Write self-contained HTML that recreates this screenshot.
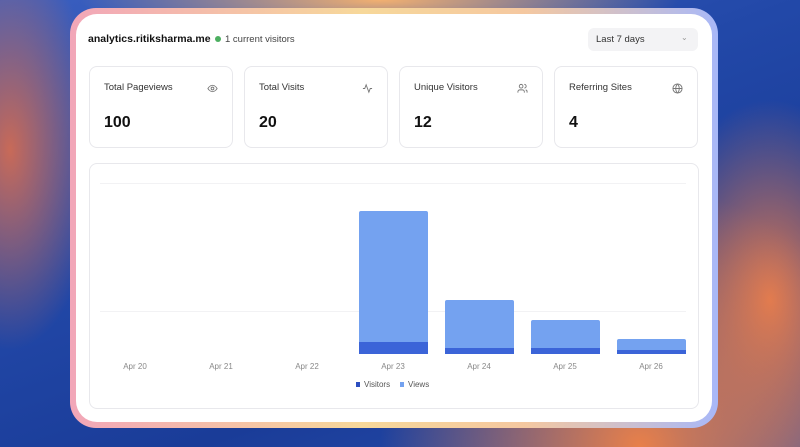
<!DOCTYPE html>
<html><head><style>
*{margin:0;padding:0;box-sizing:border-box}
body{width:800px;height:447px;overflow:hidden;font-family:"Liberation Sans",sans-serif;position:relative;
background:
radial-gradient(ellipse 300px 40px at 380px 0px,#f2b070 0%,rgba(240,160,100,0) 100%),
radial-gradient(ellipse 260px 260px at 640px 447px,#e8804a 0%,rgba(232,128,74,0) 100%),
radial-gradient(ellipse 120px 200px at 770px 300px,#e07a50 0%,rgba(224,122,80,0) 100%),
radial-gradient(ellipse 90px 200px at 10px 150px,#c86a58 0%,rgba(200,106,88,0) 100%),
linear-gradient(160deg,#3a5fc0 0%,#2248a8 40%,#1a3c98 70%,#2a50b0 100%);}
.frame{position:absolute;left:70px;top:8px;width:648px;height:420px;border-radius:26px;
background:linear-gradient(90deg,#f2a6b8,#f7d89a 45%,#f5c8a0 70%,#a8b8f8);}
.card{position:absolute;left:76px;top:14px;width:636px;height:408px;border-radius:21px;background:#fff;}
.t{position:absolute;font-size:11px;color:#222}
.stat{position:absolute;top:66px;width:144px;height:82px;border:1px solid #e8e8ec;border-radius:8px;background:#fff}
.stat .l{position:absolute;left:14px;top:15px;font-size:9.5px;color:#333}
.stat .v{position:absolute;left:14px;top:47px;font-size:16px;font-weight:bold;color:#111}
.stat svg{position:absolute;right:14px;top:16px}
.bar{position:absolute;width:69px;background:#74a2f0;border-radius:2px 2px 0 0}
.bar i{position:absolute;left:0;right:0;bottom:0;background:#3b64d8}
.lab{position:absolute;top:362px;font-size:8px;color:#888;width:60px;text-align:center}
</style></head><body>
<div class="frame"></div>
<div class="card"></div>
<div class="t" style="left:88px;top:33px;font-size:10.5px;font-weight:bold;color:#111">analytics.ritiksharma.me</div>
<div style="position:absolute;left:215px;top:36px;width:6px;height:6px;border-radius:50%;background:#4caf60"></div>
<div class="t" style="left:225px;top:34px;font-size:9.5px;color:#444">1 current visitors</div>
<div style="position:absolute;left:588px;top:28px;width:110px;height:23px;border-radius:6px;background:#f3f3f5"></div>
<div class="t" style="left:596px;top:34px;font-size:9.5px;color:#333">Last 7 days</div>
<div class="t" style="left:681px;top:33px;font-size:8px;color:#999">&#8964;</div>
<div class="stat" style="left:89px"><div class="l">Total Pageviews</div><div class="v">100</div>
<svg width="11" height="11" viewBox="0 0 24 24" fill="none" stroke="#777" stroke-width="2"><path d="M2 12s4-7 10-7 10 7 10 7-4 7-10 7S2 12 2 12z"/><circle cx="12" cy="12" r="3"/></svg></div>
<div class="stat" style="left:244px"><div class="l">Total Visits</div><div class="v">20</div>
<svg width="11" height="11" viewBox="0 0 24 24" fill="none" stroke="#777" stroke-width="2"><path d="M2 12h4l3-8 6 16 3-8h4"/></svg></div>
<div class="stat" style="left:399px"><div class="l">Unique Visitors</div><div class="v">12</div>
<svg width="11" height="11" viewBox="0 0 24 24" fill="none" stroke="#777" stroke-width="2"><circle cx="9" cy="7" r="4"/><path d="M2 21v-2a4 4 0 0 1 4-4h6a4 4 0 0 1 4 4v2M16 3a4 4 0 0 1 0 8M22 21v-2a4 4 0 0 0-3-4"/></svg></div>
<div class="stat" style="left:554px"><div class="l">Referring Sites</div><div class="v">4</div>
<svg width="11" height="11" viewBox="0 0 24 24" fill="none" stroke="#777" stroke-width="2"><circle cx="12" cy="12" r="10"/><path d="M2 12h20M12 2a15 15 0 0 1 0 20M12 2a15 15 0 0 0 0 20"/></svg></div>
<div style="position:absolute;left:89px;top:163px;width:610px;height:246px;border:1px solid #e8e8ec;border-radius:8px"></div>
<div style="position:absolute;left:100px;top:183px;width:586px;height:1px;background:#f2f2f4"></div>
<div style="position:absolute;left:100px;top:311px;width:586px;height:1px;background:#f2f2f4"></div>
<div class="bar" style="left:359px;top:211px;height:143px"><i style="height:12px"></i></div>
<div class="bar" style="left:445px;top:300px;height:54px"><i style="height:6px"></i></div>
<div class="bar" style="left:531px;top:320px;height:34px"><i style="height:6px"></i></div>
<div class="bar" style="left:617px;top:339px;height:15px"><i style="height:4px"></i></div>
<div class="lab" style="left:105px">Apr 20</div>
<div class="lab" style="left:191px">Apr 21</div>
<div class="lab" style="left:277px">Apr 22</div>
<div class="lab" style="left:363px">Apr 23</div>
<div class="lab" style="left:449px">Apr 24</div>
<div class="lab" style="left:535px">Apr 25</div>
<div class="lab" style="left:621px">Apr 26</div>
<div style="position:absolute;left:356px;top:382px;width:4px;height:5px;background:#2c4fc0"></div>
<div class="t" style="left:364px;top:380px;font-size:8px;color:#555">Visitors</div>
<div style="position:absolute;left:400px;top:382px;width:4px;height:5px;background:#74a2f0"></div>
<div class="t" style="left:408px;top:380px;font-size:8px;color:#555">Views</div>
</body></html>
